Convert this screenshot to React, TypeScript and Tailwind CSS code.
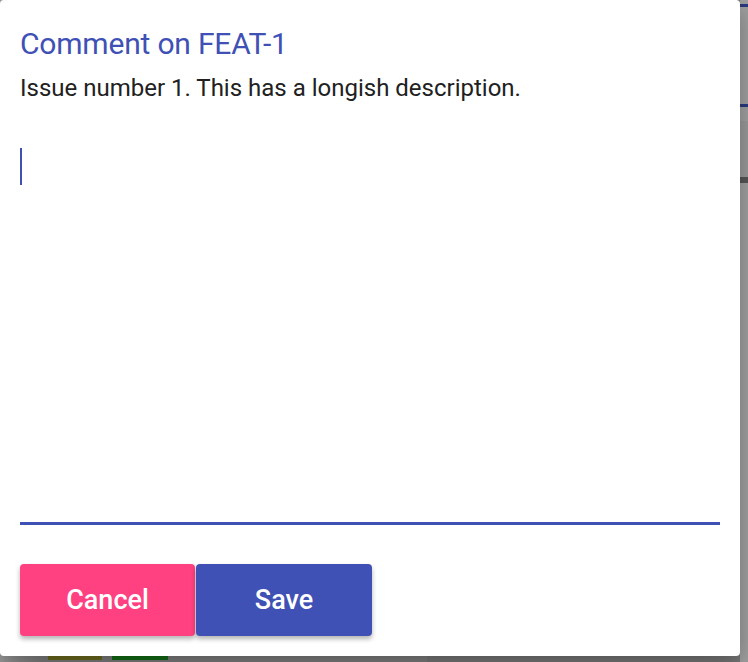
import React from 'react';

/**
 * CommentDialog
 *
 * Modal for adding a comment to an issue, shown over the board.
 */

const font = { fontFamily: 'Roboto, "Liberation Sans", sans-serif' };

function Backdrop() {
  return (
    <div className="flex h-full w-full bg-[#7a7a7a]">
      <div className="w-[42px] bg-gradient-to-r from-[#9a9a9a] to-[#7d7d7d]" />
      {/* board column under the overlay */}
      <div className="flex w-[385px] flex-col justify-end bg-[#7d7d7d]">
        <div className="flex gap-[10px] pb-[2px] pl-[6px]">
          <div className="h-[4px] w-[54px] bg-[#6b6b1f]" />
          <div className="h-[4px] w-[56px] bg-[#136c15]" />
        </div>
      </div>
      <div className="flex-1 bg-[#777777]" />
      {/* sidebar card on the right */}
      <div className="flex w-[8px] flex-col bg-[#a0a0a0]">
        <div className="mt-[4px] h-[3px] bg-[#2b3a80]" />
        <div className="mt-[97px] h-[3px] bg-[#2b3a80]" />
        <div className="mt-[14px] h-[56px] bg-[#9a9a9a]" />
        <div className="h-[6px] bg-[#555555]" />
      </div>
    </div>
  );
}

export default function App() {
  return (
    <div className="relative h-[662px] w-[748px] overflow-hidden" style={font}>
      <Backdrop />

      <div className="absolute left-0 top-0 flex h-[656px] w-[740px] flex-col rounded-[4px] bg-white px-[20px] shadow-[0_8px_24px_rgba(0,0,0,0.3)]">
        <h2 className="mt-[26px] text-[30px] font-normal leading-[36px] tracking-[-0.2px] text-[#3f51b5]">
          Comment on FEAT-1
        </h2>
        <p className="mt-[11px] text-[24px] leading-[30px] text-[#212121]">
          Issue number 1. This has a longish description.
        </p>

        {/* comment field */}
        <div className="mt-[30px] flex h-[392px] w-[700px] flex-col border-b-[3px] border-[#3f51b5] pt-[15px]">
          <div className="h-[37px] w-[2px] bg-[#3f51b5]" />
        </div>

        <div className="mt-[39px] flex gap-[1px]">
          <button className="h-[72px] w-[175px] rounded-[4px] bg-[#ff4081] text-[27px] font-medium text-white shadow-[0_3px_5px_rgba(0,0,0,0.3)]">
            Cancel
          </button>
          <button className="h-[72px] w-[176px] rounded-[4px] bg-[#3f51b5] text-[27px] font-medium text-white shadow-[0_3px_5px_rgba(0,0,0,0.3)]">
            Save
          </button>
        </div>
      </div>
    </div>
  );
}
